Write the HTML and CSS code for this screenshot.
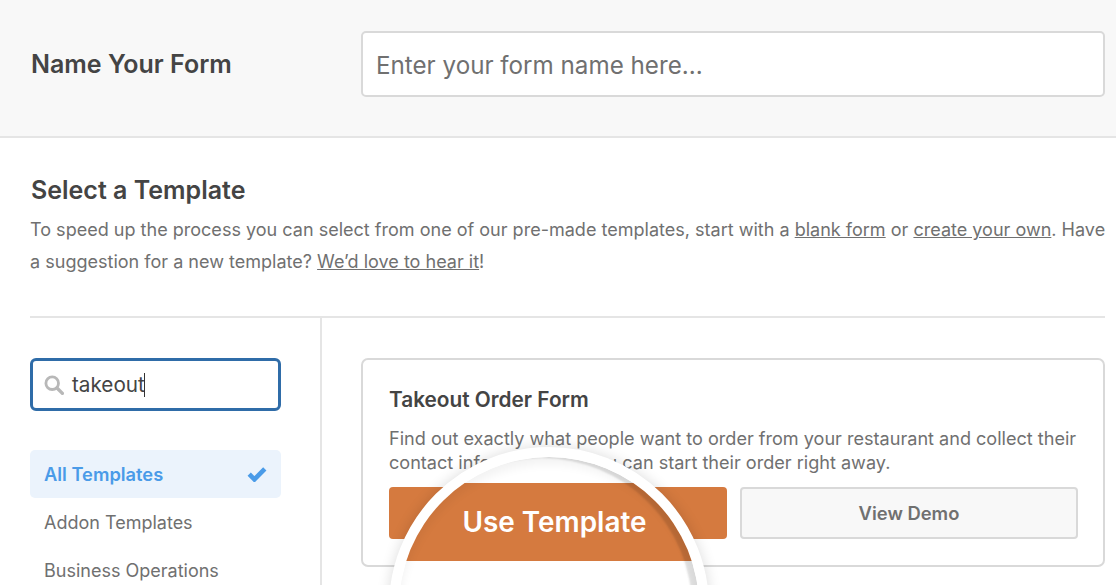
FILE: index.html
```html
<!DOCTYPE html>
<html lang="en">
<head>
<meta charset="utf-8">
<title>Name Your Form</title>
<link rel="stylesheet" href="styles.css">
</head>
<body>
<div class="page">
  <header class="name-bar">
    <h1 class="name-label">Name Your Form</h1>
    <div class="name-input">Enter your form name here...</div>
  </header>
  <section class="intro">
    <h2 class="intro-title">Select a Template</h2>
    <p class="intro-text">To speed up the process you can select from one of our pre-made templates, start with a <a href="#">blank form</a> or <a href="#">create your own</a>. Have a suggestion for a new template? <a href="#">We’d love to hear it</a>!</p>
  </section>
  <section class="browser">
    <aside class="sidebar">
      <div class="search">
        <svg class="search-icon" viewBox="0 0 20 20" aria-hidden="true"><circle cx="8.2" cy="8.2" r="6.3" fill="none" stroke="#b8b8b8" stroke-width="2.8"/><path d="M13 13l5.4 5.4" stroke="#b8b8b8" stroke-width="3.4" stroke-linecap="round"/></svg>
        <span class="search-text">takeout</span><span class="caret"></span>
      </div>
      <ul class="cats">
        <li class="cat cat-active">All Templates
          <svg class="check" viewBox="0 0 20 16" aria-hidden="true"><path d="M2.2 8.2l5.2 5.2L17.8 2.8" fill="none" stroke="#4a9be8" stroke-width="4.6" stroke-linejoin="miter"/></svg>
        </li>
        <li class="cat">Addon Templates</li>
        <li class="cat">Business Operations</li>
      </ul>
    </aside>
    <main class="content">
      <article class="card">
        <h3 class="card-title">Takeout Order Form</h3>
        <p class="card-text">Find out exactly what people want to order from your restaurant and collect their contact information so you can start their order right away.</p>
        <div class="card-actions">
          <a class="btn btn-use" href="#"></a>
          <a class="btn btn-demo" href="#">View Demo</a>
        </div>
      </article>
    </main>
  </section>
  <div class="lens">
    <div class="lens-band">Use Template</div>
  </div>
</div>
</body>
</html>
```
FILE: styles.css
```css
* { box-sizing: border-box; }
html, body { margin: 0; padding: 0; background: #fff; }
body { font-family: Inter, "Liberation Sans", sans-serif; color: #444; }
.page { position: relative; width: 1116px; height: 585px; overflow: hidden; }

.name-bar {
  height: 138px;
  background: #f8f8f8;
  border-bottom: 2px solid #e5e5e5;
  display: flex;
  align-items: center;
  padding: 0 11px 8px 31px;
}
.name-label { margin: 0; width: 330px; font-size: 25px; font-weight: 600; color: #444; }
.name-input {
  flex: 1;
  height: 66px;
  display: flex;
  align-items: center;
  padding: 2px 0 0 13px;
  background: #fff;
  border: 2px solid #d9d9d9;
  border-radius: 5px;
  font-size: 24.2px;
  color: #707070;
}

.intro { margin: 0 11px 0 30px; height: 180px; padding-top: 37px; border-bottom: 2px solid #e5e5e5; }
.intro-title { margin: 0 0 9px 1px; font-size: 25px; line-height: 30px; font-weight: 600; color: #444; }
.intro-text { margin: 0 -4px 0 0; font-size: 18.04px; line-height: 32px; color: #707070; }
.intro-text a { color: #707070; text-decoration: underline; }

.browser { display: flex; height: 267px; margin-left: 30px; margin-right: 11px; }
.sidebar { width: 292px; flex: none; padding: 40px 39px 0 0; border-right: 2px solid #e5e5e5; }
.search {
  height: 53px;
  display: flex;
  align-items: center;
  padding-left: 11px;
  border: 3px solid #2f6ca8;
  border-radius: 6px;
  background: #fff;
}
.search-icon { width: 20px; height: 20px; flex: none; margin-right: 8px; }
.search-text { font-size: 20.7px; color: #444; }
.caret { width: 1px; height: 24px; background: #333; margin-left: -1px; }
.cats { list-style: none; margin: 39px 0 0; padding: 0; }
.cat { height: 48px; display: flex; align-items: center; justify-content: space-between; padding: 1px 14px 0; font-size: 18px; color: #707070; }
.cat-active { color: #4a9be8; font-size: 18.3px; font-weight: 600; background: #ebf3fc; border-radius: 5px; padding-top: 0; }
.check { width: 20px; height: 16px; }

.content { flex: 1; min-width: 0; padding: 40px 0 0 39px; }
.card {
  height: 209px;
  padding: 27px 25px 0 26px;
  border: 2px solid #d9d9d9;
  border-radius: 7px;
  background: #fff;
}
.card-title { margin: 0 0 13px; font-size: 20.8px; line-height: 26px; font-weight: 600; color: #444; }
.card-text { margin: 0 0 13px; font-size: 18.08px; line-height: 24px; color: #707070; }
.card-actions { display: flex; gap: 13px; height: 52px; }
.btn { display: flex; align-items: center; justify-content: center; border-radius: 4px; font-size: 18.4px; font-weight: 600; text-decoration: none; }
.btn-use { width: 338px; background: #d57a3f; }
.btn-demo { width: 338px; background: #f8f8f8; border: 2px solid #d9d9d9; color: #707070; }

.lens {
  position: absolute;
  left: 389px;
  top: 447px;
  width: 320px;
  height: 320px;
  border-radius: 50%;
  border: 10px solid #fff;
  background: #fff;
  overflow: hidden;
  box-shadow: 0 0 14px rgba(0, 0, 0, 0.14);
}
.lens::after {
  content: "";
  position: absolute;
  inset: 0;
  border-radius: 50%;
  box-shadow: inset 0 7px 10px rgba(0, 0, 0, 0.05), inset -7px 1px 2px rgba(0, 0, 0, 0.12);
}
.lens-band {
  margin-top: 26px;
  height: 78px;
  display: flex;
  align-items: center;
  justify-content: center;
  padding-left: 11px;
  background: #d57a3f;
  color: #fff;
  font-size: 27.9px;
  font-weight: 600;
}
```
